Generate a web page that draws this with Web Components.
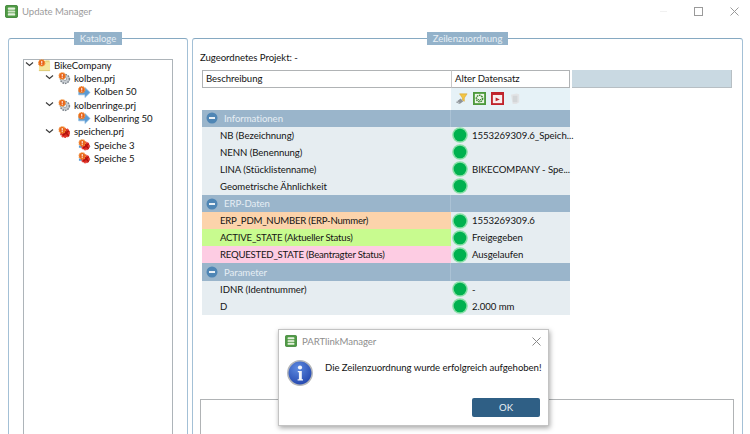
<!DOCTYPE html>
<html lang="de">
<head>
<meta charset="utf-8">
<title>Update Manager</title>
<style>
  html, body { margin: 0; height: 100%; background: #fff; overflow: hidden; }
  body { font: 9.6px Lato, Roboto, sans-serif; letter-spacing: -.05px; color: #141414; }
</style>
</head>
<body>
<um-window>
  <um-titlebar slot="title">Update Manager</um-titlebar>

  <um-panel label="Kataloge" style="width:180px">
    <um-tree>
      <um-node level="0" icon="catalog">BikeCompany</um-node>
      <um-node level="1" icon="project">kolben.prj</um-node>
      <um-node level="2" icon="arrow">Kolben 50</um-node>
      <um-node level="1" icon="project">kolbenringe.prj</um-node>
      <um-node level="2" icon="arrow">Kolbenring 50</um-node>
      <um-node level="1" icon="broken">speichen.prj</um-node>
      <um-node level="2" icon="brokenpart">Speiche 3</um-node>
      <um-node level="2" icon="brokenpart">Speiche 5</um-node>
    </um-tree>
  </um-panel>

  <um-panel label="Zeilenzuordnung" style="width:551px">
    <um-mapping project="-">
      <um-section>Informationen</um-section>
      <um-row value="1553269309.6_Speich...">NB (Bezeichnung)</um-row>
      <um-row>NENN (Benennung)</um-row>
      <um-row value="BIKECOMPANY - Spe...">LINA (Stücklistenname)</um-row>
      <um-row>Geometrische Ähnlichkeit</um-row>
      <um-section>ERP-Daten</um-section>
      <um-row color="#fcd3ab" value="1553269309.6" style="letter-spacing:-.22px">ERP_PDM_NUMBER (ERP-Nummer)</um-row>
      <um-row color="#c8fb8f" value="Freigegeben" style="letter-spacing:-.2px">ACTIVE_STATE (Aktueller Status)</um-row>
      <um-row color="#fdcce3" value="Ausgelaufen" style="letter-spacing:-.22px">REQUESTED_STATE (Beantragter Status)</um-row>
      <um-section>Parameter</um-section>
      <um-row value="-">IDNR (Identnummer)</um-row>
      <um-row value="2.000 mm">D</um-row>
    </um-mapping>
  </um-panel>

  <um-dialog slot="overlay" heading="PARTlinkManager">Die Zeilenzuordnung wurde erfolgreich aufgehoben!</um-dialog>
</um-window>

<script>
// orange warning badge that sits on most of the tree icons
const badge = (x, y) => `
  <circle cx="${x}" cy="${y}" r="3.4" fill="#e8621a" stroke="#f2953a" stroke-width="1.3" stroke-dasharray="1.3 .8"/>
  <rect x="${x - .5}" y="${y - 2}" width="1.1" height="2.6" fill="#fff"/>
  <rect x="${x - .5}" y="${y + 1.1}" width="1.1" height="1" fill="#fff"/>`;

const ICONS = {
  app: `<rect x=".5" y=".5" width="13" height="13" rx="1.5" fill="#4f9a45" stroke="#3f8537"/>
    <rect x="3" y="2.6" width="8" height="2.4" rx="1" fill="#e6f1de"/>
    <rect x="3" y="5.8" width="8" height="2.4" rx="1" fill="#cfe3c5"/>
    <rect x="3" y="9" width="8" height="2.4" rx="1" fill="#e6f1de"/>`,
  catalog: `<path d="M1 2h7l5 1v10H1z" fill="#f4e59c"/><path d="M8 1.5h4.500v2H8z" fill="#e6d27a"/>
    <path d="M1 12.500h12" stroke="#dcc874"/>${badge(4, 4.2)}`,
  project: `<circle cx="7.500" cy="7.500" r="4.800" fill="#c9ced3" stroke="#7d858c" stroke-width="1.600" stroke-dasharray="1.800 1"/>
    <circle cx="7.500" cy="7.500" r="1.800" fill="#eef0f2" stroke="#8b9298" stroke-width=".7"/>${badge(4.500, 4.200)}`,
  arrow: `<path d="M.7 4.500h6.800V1.500L13 7l-5.500 5.500v-3H.7z" fill="#5a9bd5" stroke="#8db9de" stroke-width=".7"/>${badge(4, 4)}`,
  broken: `<circle cx="7.500" cy="7.500" r="4.600" fill="#d92a22" stroke="#e8453a" stroke-width="1.800" stroke-dasharray="2 .9"/>
    <path d="M5 10l7-5M6 4.500l6 6.500" stroke="#b3120c" stroke-width="1.600"/>${badge(4.500, 4.200)}`,
  brokenpart: `<path d="M1 7h8v-3l4.500 4L9 12V9.500H1z" fill="#5a9bd5"/>
    <circle cx="8" cy="7.500" r="4" fill="#dd2a22" stroke="#e8453a" stroke-width="1.700" stroke-dasharray="2 .9"/>
    <path d="M5.500 10l6-5M6.500 4.500l5 6" stroke="#b3120c" stroke-width="1.400"/>${badge(4.500, 4.200)}`,
  funnel: `<path d="M1 11l5-4 3 3-4 3z" fill="#8d9499"/><path d="M2 10l3 2" stroke="#c6cbce"/>
    <path d="M5 2h8L10 6.500V10L8 8.500v-2z" fill="#f2c545" stroke="#d9a327" stroke-width=".6"/>`,
  match: `<rect x="1" y="1" width="12" height="12" fill="#eef6ea" stroke="#4d9a3d" stroke-width="2"/>
    <circle cx="7" cy="7" r="3.400" fill="none" stroke="#3f8c31" stroke-width="1.600" stroke-dasharray="1.800 .7"/>
    <path d="M5 7.500l2 1.500 2-1.500" fill="none" stroke="#2f7a27"/>`,
  clear: `<rect x="1" y="1" width="12" height="12" fill="#f9eeee" stroke="#c0242c" stroke-width="2"/>
    <rect x="1" y="1" width="12" height="2.200" fill="#c0242c"/><path d="M5 6l4.500 2-4.500 2z" fill="#c0242c"/>`,
  page: `<path d="M2 3l6-1.500 3 1V11L8 13H4z" fill="#e2e4e6"/><path d="M4 4h5v7H4z" fill="#d3d6d8"/>`,
  info: `<defs><radialGradient id="orb" cx=".4" cy=".3" r=".8"><stop offset="0" stop-color="#5d8ae0"/><stop offset="1" stop-color="#1d3fa8"/></radialGradient></defs>
    <circle cx="13" cy="13" r="12.200" fill="url(#orb)" stroke="#b4b6ba" stroke-width="1.500"/>
    <circle cx="13" cy="7.500" r="2.100" fill="#f4f6fb"/><path d="M10.800 11h4v8.200h1.200v1.300h-5.400v-1.300h1.300v-6.900h-1.100z" fill="#f4f6fb"/>`,
  minus: `<circle cx="6" cy="6" r="5.500" fill="#4f86b5"/><rect x="3" y="5" width="6" height="2" fill="#e9f0f5"/>`,
  dot: `<circle cx="8" cy="8" r="7.800" fill="#86dfa5"/><circle cx="8" cy="8" r="6.300" fill="#00b14f"/>`,
  chevron: `<path d="M1 1.500l3.500 3 3.500-3" fill="none" stroke="#3c3c3c" stroke-width="1.200"/>`,
  close: `<path d="M.5.500l8 8M8.500.500l-8 8" fill="none" stroke="currentColor"/>`,
  max: `<rect x=".5" y=".5" width="8" height="8" fill="none" stroke="currentColor"/>`
};

class UmIcon extends HTMLElement {
  connectedCallback() {
    const name = this.getAttribute('name');
    const size = Number(this.getAttribute('size') || 13);
    const box = Number(this.getAttribute('box') || 14);
    this.attachShadow({ mode: 'open' }).innerHTML = `
      <style>:host { display: block; flex: none; width: ${size}px; height: ${size}px; } svg { display: block; }</style>
      <svg width="${size}" height="${size}" viewBox="0 0 ${box} ${box}">${ICONS[name]}</svg>`;
  }
}

class UmWindow extends HTMLElement {
  constructor() {
    super();
    this.attachShadow({ mode: 'open' }).innerHTML = `
    <style>
      :host { display: block; position: relative; width: 750px; height: 434px; overflow: hidden; }
      main { display: flex; gap: 4px; padding-left: 8px; }
    </style>
    <slot name="title"></slot>
    <main><slot></slot></main>
    <slot name="overlay"></slot>`;
  }
}

class UmTitlebar extends HTMLElement {
  constructor() {
    super();
    this.attachShadow({ mode: 'open' }).innerHTML = `
    <style>
      :host { display: flex; align-items: center; gap: 4px; height: 22px; margin-bottom: 10px; padding: 0 11px 0 5px; color: #9c9c9c; }
      .title { flex: 1; }
      .controls { display: flex; align-items: center; gap: 27px; color: #9a9a9a; }
      .min { width: 7px; height: 1px; background: #f1f1f1; }
    </style>
    <um-icon name="app" size="13"></um-icon>
    <div class="title"><slot></slot></div>
    <div class="controls">
      <div class="min"></div>
      <um-icon name="max" size="9" box="9"></um-icon>
      <um-icon name="close" size="9" box="9"></um-icon>
    </div>`;
  }
}

class UmPanel extends HTMLElement {
  connectedCallback() {
    this.attachShadow({ mode: 'open' }).innerHTML = `
    <style>
      :host { display: block; flex: none; box-sizing: border-box; height: 430px; }
      fieldset { box-sizing: border-box; height: 100%; margin: 0; padding: 0; border: 1px solid #a3c0d6; border-top-color: #86a9c2; border-radius: 3px; min-inline-size: 0; }
      legend { margin: 0 auto; padding: 0 6px; height: 13px; line-height: 13px; background: #93b2ca; color: #e6eef4; }
    </style>
    <fieldset>
      <legend>${this.getAttribute('label')}</legend>
      <slot></slot>
    </fieldset>`;
  }
}

class UmTree extends HTMLElement {
  constructor() {
    super();
    this.attachShadow({ mode: 'open' }).innerHTML = `
    <style>
      :host { display: block; box-sizing: border-box; height: 380px; margin: 14px 14px 0; border: 1px solid #adb4b9; }
      .rows { margin-top: -1px; }
    </style>
    <div class="rows"><slot></slot></div>`;
  }
}

class UmNode extends HTMLElement {
  connectedCallback() {
    const level = Number(this.getAttribute('level'));
    this.attachShadow({ mode: 'open' }).innerHTML = `
    <style>
      :host { display: flex; align-items: center; height: 13.33px; padding-left: ${level * 20}px; }
      .chevron { width: 10px; margin-right: 4px; display: flex; justify-content: center; }
      .label { margin: -1px 0 0 3px; white-space: nowrap; }
    </style>
    <div class="chevron">${level < 2 ? '<um-icon name="chevron" size="9" box="9"></um-icon>' : ''}</div>
    <um-icon name="${this.getAttribute('icon')}" size="13"></um-icon>
    <div class="label"><slot></slot></div>`;
  }
}

class UmMapping extends HTMLElement {
  connectedCallback() {
    this.attachShadow({ mode: 'open' }).innerHTML = `
    <style>
      :host { display: block; padding: 5px 8px 0 7px; }
      .project { height: 20px; line-height: 16px; }
      .head { display: grid; grid-template-columns: 249px 119px 162px; margin-left: 2px; height: 18px; line-height: 16px; }
      .cell { box-sizing: border-box; border: 1px solid #b0b3b5; border-right: 0; padding-left: 3px; }
      .cell + .cell { border-right: 1px solid #b0b3b5; border-left: 1px solid #c8c8c8; }
      .spare { background: #c9d9e2; margin-left: 2px; border-right: 1px solid #b7bfc4; border-bottom: 1px solid #b7bfc4; }
      .tools { display: flex; align-items: center; gap: 5px; box-sizing: border-box; width: 119px; height: 21.500px; margin-left: 251px; padding-left: 4px; background: #e6f2f7; }
      .rows { margin-left: 2px; width: 368px; }
      .target { box-sizing: border-box; height: 60px; margin-top: 84px; border: 1px solid #b0b3b5; }
    </style>
    <div class="project">Zugeordnetes Projekt: ${this.getAttribute('project')}</div>
    <div class="head">
      <div class="cell">Beschreibung</div>
      <div class="cell">Alter Datensatz</div>
      <div class="spare"></div>
    </div>
    <div class="tools">
      <um-icon name="funnel" size="13"></um-icon>
      <um-icon name="match" size="13"></um-icon>
      <um-icon name="clear" size="13"></um-icon>
      <um-icon name="page" size="13"></um-icon>
    </div>
    <div class="rows"><slot></slot></div>
    <div class="target"></div>`;
  }
}

class UmSection extends HTMLElement {
  constructor() {
    super();
    this.attachShadow({ mode: 'open' }).innerHTML = `
    <style>
      :host { display: grid; grid-template-columns: 249px 1fr; height: 17.120px; background: #9ab5cb; color: #e6eef4; line-height: 17px; }
      .left { display: flex; align-items: center; gap: 6px; padding-left: 4px; border-right: 1px solid #abc2d5; }
    </style>
    <div class="left"><um-icon name="minus" size="12" box="12"></um-icon><slot></slot></div>
    <div></div>`;
  }
}

class UmRow extends HTMLElement {
  connectedCallback() {
    const color = this.getAttribute('color') || 'transparent';
    const value = this.getAttribute('value') || '';
    this.attachShadow({ mode: 'open' }).innerHTML = `
    <style>
      :host { display: grid; grid-template-columns: 249px 1fr; height: 17.120px; background: #e6edf1; line-height: 17px; }
      .left { padding-left: 18px; background: ${color}; white-space: nowrap; }
      .right { display: flex; align-items: center; gap: 4px; padding-left: 1px; white-space: nowrap; letter-spacing: -.05px; }
    </style>
    <div class="left"><slot></slot></div>
    <div class="right"><um-icon name="dot" size="16" box="16"></um-icon><span>${value}</span></div>`;
  }
}

class UmDialog extends HTMLElement {
  connectedCallback() {
    this.attachShadow({ mode: 'open' }).innerHTML = `
    <style>
      :host { position: absolute; left: 278px; top: 329px; box-sizing: border-box; width: 271px; height: 97px; display: flex; flex-direction: column; background: #fff; border: 1px solid #c3c3c3; box-shadow: 1px 2px 5px rgba(0,0,0,.35); }
      .bar { display: flex; align-items: center; gap: 5px; height: 22px; padding: 0 7px 0 6px; color: #8e8e8e; flex: none; }
      .bar span { flex: 1; }
      .x { color: #8a8a8a; }
      .body { display: flex; gap: 12px; padding: 8px 0 0 8px; height: 36px; flex: none; }
      .msg { padding-top: 1px; white-space: nowrap; line-height: 14px; }
      .foot { display: flex; justify-content: flex-end; padding: 2px 8px 0 0; }
      button { width: 68px; height: 19px; padding: 0; border: 0; border-radius: 2px; background: #2f5f85; color: #e9f0f5; font: inherit; letter-spacing: inherit; }
    </style>
    <div class="bar">
      <um-icon name="app" size="12"></um-icon>
      <span>${this.getAttribute('heading')}</span>
      <um-icon class="x" name="close" size="9" box="9"></um-icon>
    </div>
    <div class="body">
      <um-icon name="info" size="26" box="26"></um-icon>
      <div class="msg"><slot></slot></div>
    </div>
    <div class="foot"><button>OK</button></div>`;
  }
}

customElements.define('um-icon', UmIcon);
customElements.define('um-window', UmWindow);
customElements.define('um-titlebar', UmTitlebar);
customElements.define('um-panel', UmPanel);
customElements.define('um-tree', UmTree);
customElements.define('um-node', UmNode);
customElements.define('um-mapping', UmMapping);
customElements.define('um-section', UmSection);
customElements.define('um-row', UmRow);
customElements.define('um-dialog', UmDialog);
</script>
</body>
</html>
